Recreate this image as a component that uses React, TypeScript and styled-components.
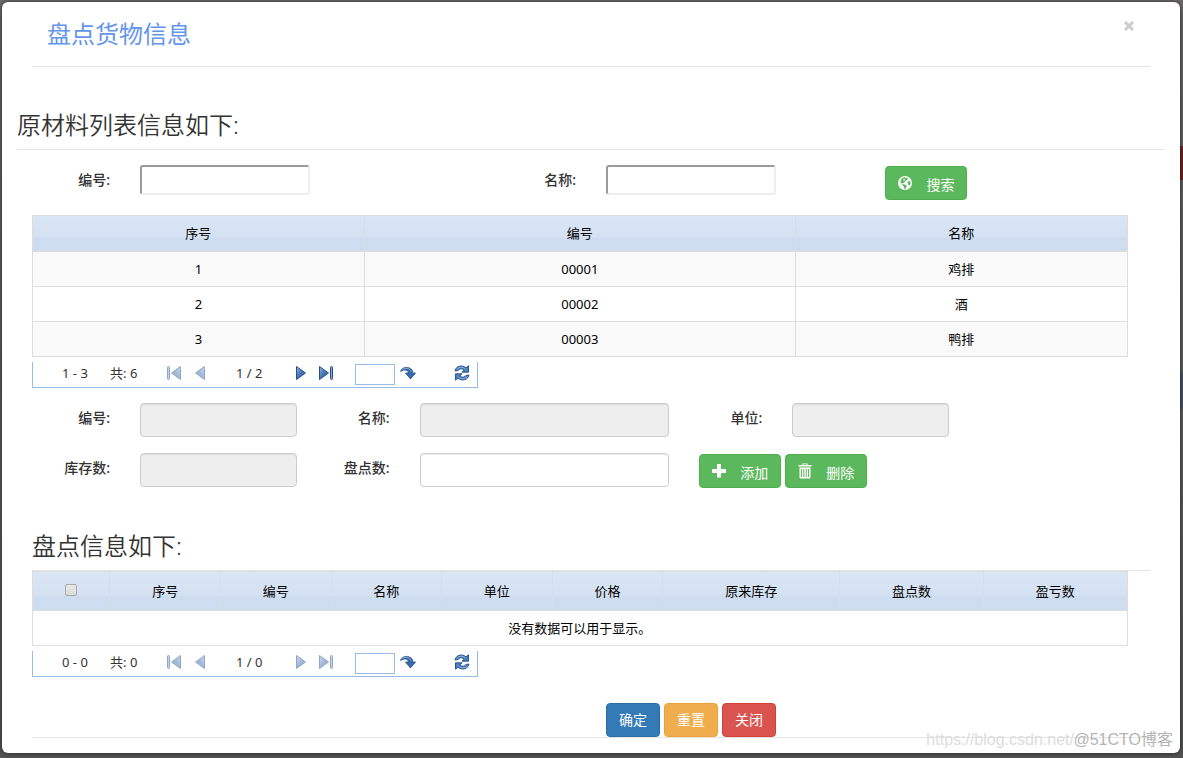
import React from "react";
import styled, { createGlobalStyle, css } from "styled-components";

const GlobalStyle = createGlobalStyle`
  * { box-sizing: border-box; }
  body {
    margin: 0;
    background: linear-gradient(#6e6c6b, #626262 20px, #525252);
    color: #333;
    font: 14px/20px "Noto Sans", "Noto Sans CJK SC", sans-serif;
  }
  button, input { font-family: inherit; }
`;

const Backdrop = styled.div`
  position: relative;
  padding: 2px 3px 5px 2px;
`;

const BackdropMark = styled.span<{ $top: number; $height: number; $color: string }>`
  position: absolute;
  top: ${(p) => p.$top}px;
  right: 0;
  width: 3px;
  height: ${(p) => p.$height}px;
  background: ${(p) => p.$color};
`;

const Modal = styled.main`
  position: relative;
  padding: 0 15px 15px;
  background: #fff;
  border-radius: 6px;
  box-shadow: 0 0 4px rgba(0, 0, 0, 0.6);
`;

const ModalHeader = styled.header`
  display: flex;
  justify-content: space-between;
  align-items: flex-start;
  height: 65px;
  margin: 0 15px;
  padding: 16px 15px 0;
  border-bottom: 1px solid #e5e5e5;
`;

const Title = styled.h1`
  margin: 0;
  color: #6495ed;
  font-size: 24px;
  line-height: 32px;
  font-weight: 400;
`;

const CloseButton = styled.button`
  display: flex;
  margin: 2px 0 0;
  padding: 0;
  border: 0;
  background: none;
  color: #ccc;
`;

const SectionTitle = styled.h2<{ $gap: number }>`
  margin: ${(p) => p.$gap}px 0 0;
  padding-bottom: 8px;
  font-size: 24px;
  line-height: 32px;
  font-weight: 350;
  border-bottom: 1px solid #e5e5e5;
`;

const Content = styled.div`
  padding: 0 15px;
`;

const FormRow = styled.div`
  display: grid;
  grid-template-columns: repeat(12, minmax(0, 1fr));
  height: 50px;
`;

const SearchRow = styled(FormRow)`
  height: 65px;
  padding-top: 15px;
`;

const Cell = styled.div<{ $start: number; $span: number }>`
  grid-column: ${(p) => p.$start} / span ${(p) => p.$span};
  padding: 0 15px;
  white-space: nowrap;
`;

const Label = styled.label`
  display: block;
  padding-top: 5px;
  font-weight: 500;
  text-align: right;
`;

const SearchInput = styled.input`
  display: block;
  width: 170px;
  height: 30px;
  border: 2px solid;
  border-color: #9a9a9a #eee #eee #9a9a9a;
  border-radius: 3px;
  background: #fff;
`;

const TextInput = styled.input`
  display: block;
  width: 100%;
  height: 34px;
  padding: 6px 12px;
  border: 1px solid #ccc;
  border-radius: 4px;
  background: #fff;
  box-shadow: inset 0 1px 1px rgba(0, 0, 0, 0.075);
  &:disabled { background: #eee; }
`;

const tones = {
  green: css`background: #5cb85c; border-color: #4cae4c;`,
  blue: css`background: #337ab7; border-color: #2e6da4;`,
  orange: css`background: #f0ad4e; border-color: #eea236;`,
  red: css`background: #d9534f; border-color: #d43f3a;`,
};

const Button = styled.button<{ $tone: keyof typeof tones }>`
  height: 34px;
  padding: 0 12px;
  border: 1px solid;
  border-radius: 4px;
  color: #fff;
  font-size: 14px;
  line-height: 20px;
  ${(p) => tones[p.$tone]}
`;

const IconButton = styled(Button)`
  display: inline-flex;
  align-items: center;
  gap: 14px;
  padding: 4px 12px 0;
  svg { margin-top: -4px; }
`;

const ButtonGroup = styled.div`
  display: flex;
  gap: 4px;
  padding-top: 1px;
`;

const Table = styled.table<{ $head: number }>`
  width: 98%;
  table-layout: fixed;
  border-collapse: collapse;
  color: #000;
  font-size: 13px;
  line-height: 18px;
  text-align: center;
  th, td { padding: 0; border: 1px solid #ddd; font-weight: 400; }
  th { padding-bottom: 1px; }
  thead tr {
    height: ${(p) => p.$head}px;
    background: linear-gradient(#dae6f4, #d4e1f2 60%, #cddcef 62%, #cfddf0);
  }
  th { border-color: #ddd #d6deea; }
  tr > th:first-child { border-left-color: #ddd; }
  tr > th:last-child { border-right-color: #ddd; }
  tbody tr { height: 35px; }
  tbody tr:nth-child(odd) { background: #f9f9f9; }
  tbody tr.empty { background: #fff; }
`;

const CheckAll = styled.input`
  appearance: none;
  display: block;
  width: 12px;
  height: 12px;
  margin: -2px auto 0;
  border: 1px solid #a9a9a9;
  border-radius: 2px;
  background: linear-gradient(#e8e8e8, #dcdcdc);
`;

const PagerBar = styled.nav`
  display: flex;
  align-items: center;
  width: 446px;
  height: 26px;
  margin: 5px 0 15px;
  padding: 0 0 3px 29px;
  border: 1px solid #99bbe8;
  border-top: 0;
  font-size: 13px;
  color: #333;
  white-space: nowrap;
`;

const PagerText = styled.span<{ $width: number }>`
  width: ${(p) => p.$width}px;
`;

const PagerButton = styled.button<{ $width: number }>`
  display: flex;
  width: ${(p) => p.$width}px;
  padding: 0;
  border: 0;
  background: none;
`;

const PageInput = styled.input`
  width: 40px;
  height: 21px;
  margin: 2px 5px 0 0;
  border: 1px solid #99bbe8;
  background: #fff;
`;

const Footer = styled.footer`
  display: flex;
  justify-content: center;
  gap: 4px;
  margin-top: 26px;
  padding-left: 200px;
  border-bottom: 1px solid #e5e5e5;
`;

const Watermark = styled.span<{ $right: number; $color: string }>`
  position: absolute;
  right: ${(p) => p.$right}px;
  bottom: 3px;
  color: ${(p) => p.$color};
  font: 16px/20px "Liberation Sans", "Noto Sans CJK SC", sans-serif;
  pointer-events: none;
`;

const GlobeIcon = () => (
  <svg width="14" height="14" viewBox="0 0 14 14" aria-hidden="true">
    <circle cx="7" cy="7" r="7" fill="#fff" />
    <path d="M4 2.2 6.6 1l1.2 1.2 1.6-.5.8 1.5-1.4.4-.4 1.5-1.5.5-.7 1.2-1.5.2-.5 1 1.4.2 2 .5 1.3 1.5-1 1.4-.3 1.7-1.2-.4-.4-2.1L4.6 9.3 4 7.8 2.5 6.4l.4-2.2z" fill="#5cb85c" />
    <path d="M5 3.6 7 2.900l.3 1L5.800 5z" fill="#fff" />
    <path d="M10.2 5.4 12 5l.6 2.2-1 2.2-1.2-.4-.2-1.4-1-.8z" fill="#5cb85c" />
  </svg>
);

const PlusIcon = () => (
  <svg width="14" height="14" viewBox="0 0 14 14" aria-hidden="true">
    <path d="M5 0h4v5h5v4H9v4.500H5V9H0V5h5z" fill="#fff" />
  </svg>
);

const TrashIcon = () => (
  <svg width="14" height="16" viewBox="0 0 14 16" aria-hidden="true">
    <path d="M4.500 2V.5h5V2H13.500v1.500H.5V2zM5.500 2h3v-.7h-3zM1.500 4.500h11v9.800q0 1.200-1.200 1.200H2.700q-1.200 0-1.200-1.200z" fill="#fff" />
    <path d="M3.500 6v8M5.800 6v8M8.200 6v8M10.500 6v8" stroke="#5cb85c" />
  </svg>
);

const CloseIcon = () => (
  <svg width="12" height="12" viewBox="0 0 12 12" aria-hidden="true">
    <path d="m2 2 8 8M10 2l-8 8" stroke="currentColor" strokeWidth="3" />
  </svg>
);

const ArrowIcon = ({ forward, bar, dim }: { forward?: boolean; bar?: boolean; dim?: boolean }) => (
  <svg width="16" height="16" viewBox="0 0 16 16" opacity={dim ? 0.5 : 1} aria-hidden="true">
    <defs>
      <linearGradient id="arrowFill" x1="0" y1="0" x2="1" y2="1">
        <stop offset="0" stopColor="#8fb5e3" />
        <stop offset="0.550" stopColor="#416fab" />
        <stop offset="1" stopColor="#6e9bd2" />
      </linearGradient>
    </defs>
    <g transform={forward ? undefined : "matrix(-1 0 0 1 16 0)"}>
      <path d="M1.500 1.500v13L10.500 8z" fill="url(#arrowFill)" stroke="#244f8c" />
      {bar && <rect x="12.500" y="1.500" width="2" height="13" rx="1" fill="#83a9d8" stroke="#244f8c" />}
    </g>
  </svg>
);

const GoIcon = () => (
  <svg width="16" height="16" viewBox="0 0 16 16" aria-hidden="true">
    <path d="M.6 6.500C1.500 2 9 .5 12.400 5.500V8h3.100l-5 6-5-6h3C8.600 4.800 4.200 3.800.6 6.500z" fill="#3a6cad" stroke="#204a85" strokeWidth=".8" />
    <path d="M2.500 4.500c3-2 7-1.500 8.400 2" fill="none" stroke="#86add9" />
  </svg>
);

const RefreshIcon = () => (
  <svg width="16" height="16" viewBox="0 0 16 16" aria-hidden="true">
    <g fill="#4d7fbd" stroke="#204a85" strokeWidth=".9" strokeLinejoin="round">
      <path d="M1 6C1.500 1.500 8-.8 12 2.800L14.500.8V7.200H8l2.200-2.200C8 3.200 5 3.500 4.200 5.500z" />
      <path d="M15 10c-.5 4.500-7 6.800-11 3.200l-2.500 2V8.800H8L5.800 11c2.200 1.800 5.200 1.500 6-.5z" />
    </g>
    <path d="M2.500 4.500C5 1.500 9 1.500 11.500 4M13.500 11.500c-2.500 3-6.500 3-9 .5" fill="none" stroke="#a3c3e8" strokeWidth=".8" />
  </svg>
);

interface PagerProps { range: string; total: number; page: string; hasNext?: boolean }

const Pager = ({ range, total, page, hasNext }: PagerProps) => (
  <PagerBar aria-label="分页">
    <PagerText $width={48}>{range}</PagerText>
    <PagerText $width={56}>共: {total}</PagerText>
    <PagerButton $width={24} aria-label="首页" disabled><ArrowIcon bar dim /></PagerButton>
    <PagerButton $width={46} aria-label="上一页" disabled><ArrowIcon dim /></PagerButton>
    <PagerText $width={59}>{page}</PagerText>
    <PagerButton $width={23} aria-label="下一页" disabled={!hasNext}><ArrowIcon forward dim={!hasNext} /></PagerButton>
    <PagerButton $width={37} aria-label="末页" disabled={!hasNext}><ArrowIcon forward bar dim={!hasNext} /></PagerButton>
    <PageInput aria-label="页码" />
    <PagerButton $width={54} aria-label="跳转"><GoIcon /></PagerButton>
    <PagerButton $width={16} aria-label="刷新"><RefreshIcon /></PagerButton>
  </PagerBar>
);

const goods = [
  ["1", "00001", "鸡排"],
  ["2", "00002", "酒"],
  ["3", "00003", "鸭排"],
];
const goodsWidths = [30, 39, 30];
const countHeads = ["序号", "编号", "名称", "单位", "价格", "原来库存", "盘点数", "盈亏数"];
const countWidths = [7, 10, 10, 10, 10, 10, 16, 13, 13];

const Columns = ({ widths }: { widths: number[] }) => {
  const total = widths.reduce((a, b) => a + b, 0);
  return (
    <colgroup>
      {widths.map((w, i) => <col key={i} style={{ width: `${(w / total) * 100}%` }} />)}
    </colgroup>
  );
};

interface FieldProps { id: string; label: string; start: number; span: number; disabled?: boolean }

const Field = ({ id, label, start, span, disabled }: FieldProps) => (
  <>
    <Cell $start={start - 1} $span={1}><Label htmlFor={id}>{label}</Label></Cell>
    <Cell $start={start} $span={span}><TextInput id={id} disabled={disabled} /></Cell>
  </>
);

export default function App() {
  return (
    <>
      <GlobalStyle />
      <Backdrop>
        <BackdropMark $top={146} $height={34} $color="#6b2220" />
        <BackdropMark $top={372} $height={37} $color="#48525e" />
        <Modal>
          <ModalHeader>
            <Title>盘点货物信息</Title>
            <CloseButton aria-label="关闭窗口"><CloseIcon /></CloseButton>
          </ModalHeader>
          <SectionTitle $gap={42}>原材料列表信息如下:</SectionTitle>
          <Content>
            <SearchRow>
              <Cell $start={1} $span={1}><Label htmlFor="searchCode">编号:</Label></Cell>
              <Cell $start={2} $span={4}><SearchInput id="searchCode" /></Cell>
              <Cell $start={6} $span={1}><Label htmlFor="searchName">名称:</Label></Cell>
              <Cell $start={7} $span={3}><SearchInput id="searchName" /></Cell>
              <Cell $start={10} $span={3}>
                <ButtonGroup><IconButton $tone="green"><GlobeIcon />搜索</IconButton></ButtonGroup>
              </Cell>
            </SearchRow>
            <Table $head={36}>
              <Columns widths={goodsWidths} />
              <thead><tr><th>序号</th><th>编号</th><th>名称</th></tr></thead>
              <tbody>
                {goods.map((row) => <tr key={row[0]}>{row.map((v) => <td key={v}>{v}</td>)}</tr>)}
              </tbody>
            </Table>
            <Pager range="1 - 3" total={6} page="1 / 2" hasNext />
            <FormRow>
              <Field id="code" label="编号:" start={2} span={2} disabled />
              <Field id="name" label="名称:" start={5} span={3} disabled />
              <Field id="unit" label="单位:" start={9} span={2} disabled />
            </FormRow>
            <FormRow>
              <Field id="stock" label="库存数:" start={2} span={2} disabled />
              <Field id="count" label="盘点数:" start={5} span={3} />
              <Cell $start={8} $span={5}>
                <ButtonGroup>
                  <IconButton $tone="green"><PlusIcon />添加</IconButton>
                  <IconButton $tone="green"><TrashIcon />删除</IconButton>
                </ButtonGroup>
              </Cell>
            </FormRow>
            <SectionTitle $gap={27}>盘点信息如下:</SectionTitle>
            <Table $head={39}>
              <Columns widths={countWidths} />
              <thead>
                <tr>
                  <th><CheckAll type="checkbox" aria-label="全选" /></th>
                  {countHeads.map((h) => <th key={h}>{h}</th>)}
                </tr>
              </thead>
              <tbody><tr className="empty"><td colSpan={9}>没有数据可以用于显示。</td></tr></tbody>
            </Table>
            <Pager range="0 - 0" total={0} page="1 / 0" />
            <Footer>
              <Button $tone="blue">确定</Button>
              <Button $tone="orange">重置</Button>
              <Button $tone="red">关闭</Button>
            </Footer>
          </Content>
          <Watermark $right={106} $color="#ddd">https://blog.csdn.net/</Watermark>
          <Watermark $right={7} $color="#b4b4b4">@51CTO博客</Watermark>
        </Modal>
      </Backdrop>
    </>
  );
}
